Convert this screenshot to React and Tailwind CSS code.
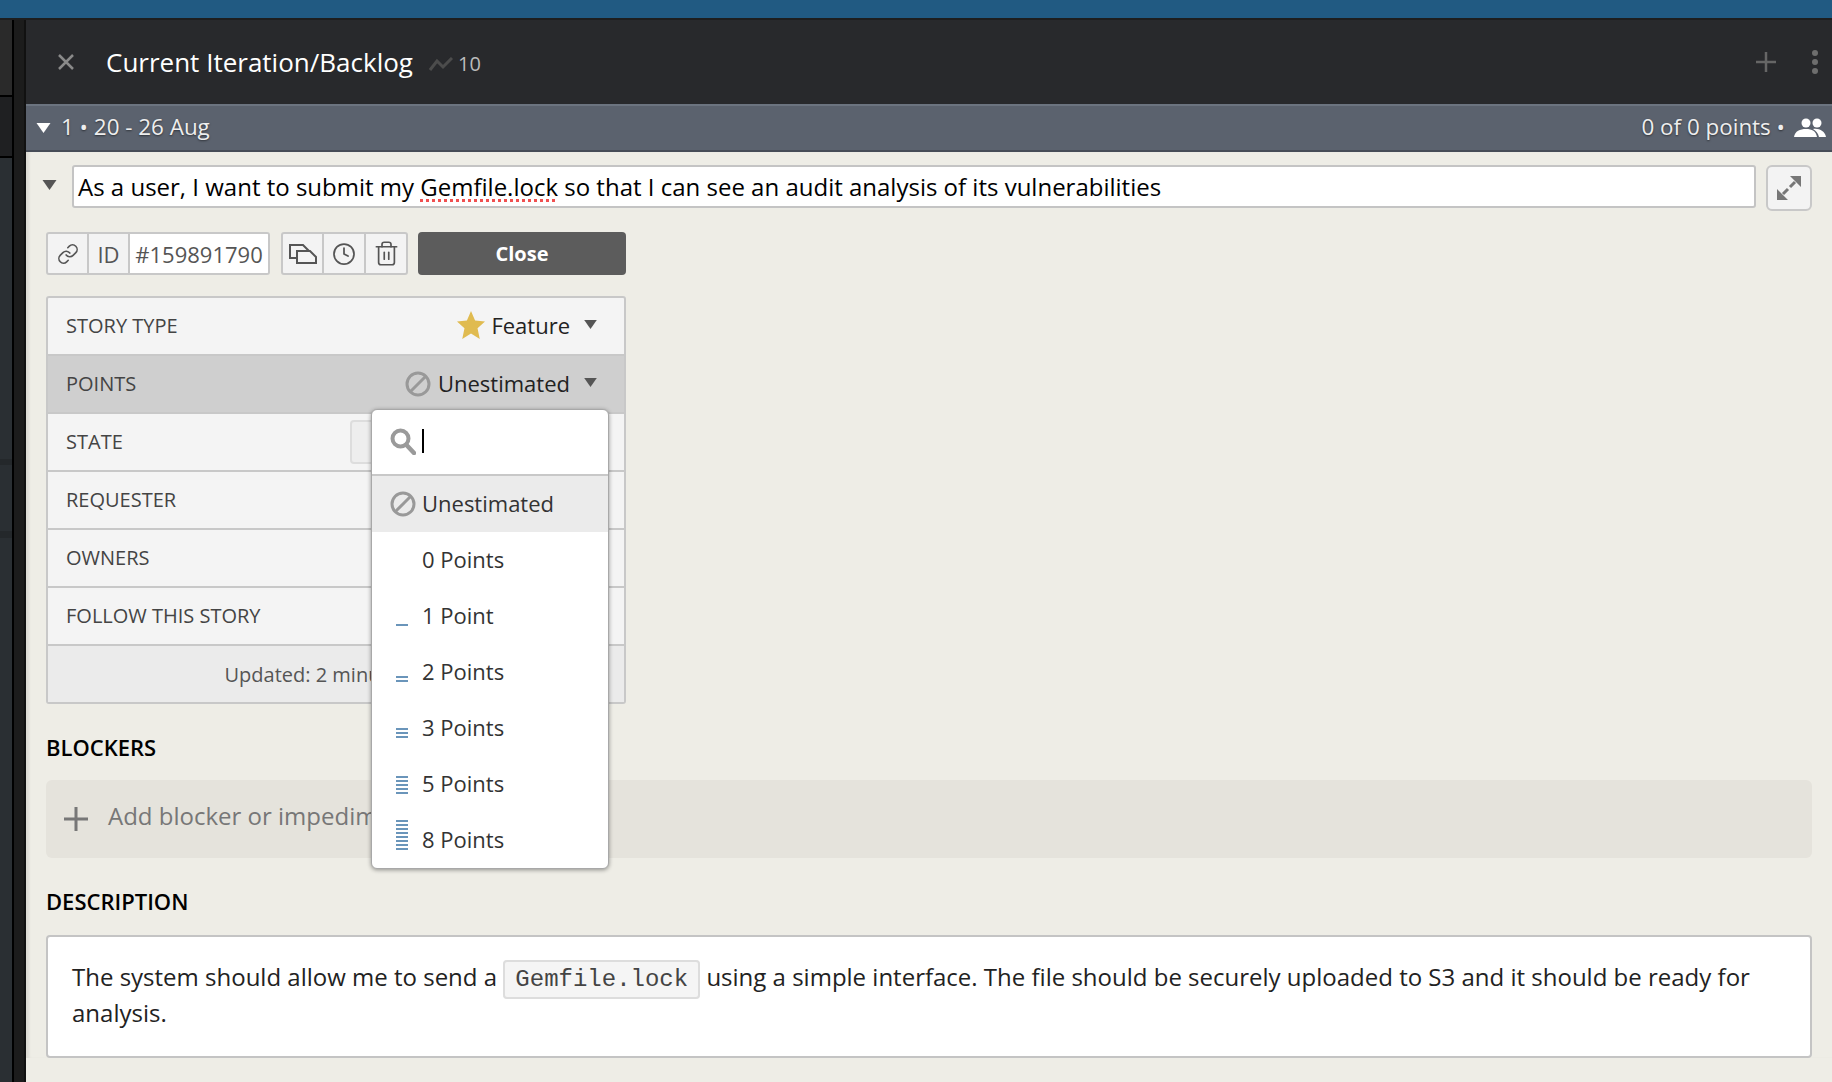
import { Link, Clock, Trash2 } from 'lucide-react';

function Caret({ className }) {
  return (
    <svg viewBox="0 0 14 10" className={className} fill="currentColor">
      <path d="M0 0h14L7 10z" />
    </svg>
  );
}

function NoEstimate() {
  return (
    <svg viewBox="0 0 26 26" className="h-[26px] w-[26px] shrink-0 text-[#999]" fill="none" stroke="currentColor" strokeWidth="3">
      <circle cx="13" cy="13" r="11" />
      <path d="M5.500 20.500 20.500 5.500" />
    </svg>
  );
}

function PlusIcon({ className }) {
  return (
    <svg viewBox="0 0 24 24" className={className} fill="none" stroke="currentColor" strokeWidth="3">
      <path d="M12 0v24M0 12h24" />
    </svg>
  );
}

function Bars({ count }) {
  return (
    <span className="flex w-3 flex-col justify-end gap-[2px]">
      {Array.from({ length: count }).map((_, i) => (
        <span key={i} className="h-[2px] w-3 shrink-0 bg-[#6a95ba]" />
      ))}
    </span>
  );
}

function Row({ label, children, active }) {
  return (
    <div
      className={`flex h-[58px] items-center justify-between border-b-2 border-[#c8c8c8] pl-[18px] pr-[26px] ${
        active ? 'bg-[#cfcfcf]' : ''
      }`}
    >
      <span className="text-[20px] text-[#444]">{label}</span>
      {children}
    </div>
  );
}

const points = [
  { label: '0 Points', count: 0 },
  { label: '1 Point', count: 1 },
  { label: '2 Points', count: 2 },
  { label: '3 Points', count: 3 },
  { label: '5 Points', count: 5 },
  { label: '8 Points', count: 8 },
];

function PointsMenu() {
  return (
    <div className="absolute left-[325px] top-[177px] z-10 w-[238px] rounded-md border border-[#a8a8a8] bg-white text-[22px] shadow-[0_1px_4px_rgba(0,0,0,0.4)]">
      <div className="flex h-[66px] items-center border-b-2 border-[#c8c8c8] pb-[2px] pl-[18px]">
        <svg viewBox="0 0 26 27" className="h-[27px] w-[26px] text-[#9a9a9a]" fill="none" stroke="currentColor">
          <circle cx="10.500" cy="10.500" r="8" strokeWidth="4" />
          <path d="m16.500 17 7.500 8" strokeWidth="4.500" strokeLinecap="round" />
        </svg>
        <span className="ml-[6px] h-6 w-[2px] bg-black" />
      </div>
      <div className="flex h-14 items-center gap-[6px] bg-[#ebebeb] pl-[18px] text-[#333]">
        <NoEstimate />
        <span className="mb-[2px]">Unestimated</span>
      </div>
      {points.map((p) => (
        <div key={p.label} className="flex h-14 items-center pl-6">
          <span className="flex h-5 w-[26px] items-end">
            {p.count > 0 && <Bars count={p.count} />}
          </span>
          <span className="mb-[2px] text-[#333]">{p.label}</span>
        </div>
      ))}
    </div>
  );
}

function SideRail() {
  return (
    <div className="flex w-[26px] shrink-0">
      <div className="flex w-3 flex-col border-t-2 border-[#1e1e1e] bg-[#2a2f33]">
        <div className="h-[77px] border-b-2 border-black bg-[#2a2a2a]" />
        <div className="h-[61px] border-b-2 border-black bg-[#1f2022]" />
        <div className="mt-[301px] h-[6px] bg-[#24282b]" />
        <div className="mt-[66px] h-[7px] bg-[#24282b]" />
      </div>
      <div className="w-[2px] border-t-2 border-[#1e1e1e] bg-black" />
      <div className="w-[10px] border-t-2 border-[#1e1e1e] bg-[#1c1c1c]" />
      <div className="w-[2px] border-t-2 border-[#1e1e1e] bg-[#111]" />
    </div>
  );
}

function App() {
  return (
    <div className="flex h-screen w-full flex-col overflow-hidden bg-[#24282c] font-['Open_Sans',sans-serif] text-[24px] leading-9">
      <div className="h-[18px] shrink-0 bg-[#215a82]" />
      <div className="flex min-h-0 flex-1">
        <SideRail />
        <div className="min-w-0 flex-1 bg-[#eeede6]">
          <div className="flex h-[86px] items-center border-t-2 border-[#1e1e1e] bg-[#28292c] pl-8 pr-[14px]">
            <svg viewBox="0 0 16 16" className="h-4 w-4 text-[#8a8a8a]" fill="none" stroke="currentColor" strokeWidth="2.500">
              <path d="m1 1 14 14M15 1 1 15" />
            </svg>
            <span className="ml-8 text-[26px] font-medium text-white">Current Iteration/Backlog</span>
            <span className="ml-4 mt-[3px] flex items-center gap-[5px] text-[20px] text-[#bbb]">
              <svg viewBox="0 0 24 14" className="h-[14px] w-6 text-[#4c4c4c]" fill="none" stroke="currentColor" strokeWidth="3">
                <path d="M1 13 8 4l6 6 9-9" />
              </svg>
              10
            </span>
            <div className="ml-auto flex items-center gap-9">
              <PlusIcon className="h-5 w-5 text-[#666]" />
              <span className="flex flex-col gap-[3px]">
                <span className="h-[6px] w-[6px] rounded-full bg-[#6e6e6e]" />
                <span className="h-[6px] w-[6px] rounded-full bg-[#6e6e6e]" />
                <span className="h-[6px] w-[6px] rounded-full bg-[#6e6e6e]" />
              </span>
            </div>
          </div>

          <div className="flex h-12 items-center border-t-2 border-b-2 border-t-[#6c7480] border-b-[#464c57] bg-[#5b626e] pl-[10px] pr-[6px] text-[22.400px] text-[#eee] [text-shadow:0_1px_2px_rgba(0,0,0,0.5)]">
            <Caret className="h-[10px] w-[15px] text-white" />
            <span className="mb-[2px] ml-[10px]">1 • 20 - 26 Aug</span>
            <span className="mb-[2px] ml-auto">0 of 0 points •</span>
            <svg viewBox="0 0 32 20" className="ml-[9px] h-5 w-8 text-white" fill="currentColor">
              <circle cx="12" cy="5" r="4.500" />
              <circle cx="23" cy="5" r="4.500" />
              <path d="M0 19c1-6 6-8 12-8s10 2 11 8zM19 11c6-1 12 2 13 8h-7c-1-4-3-6-6-8z" />
            </svg>
          </div>

          <div className="pl-[15px] pr-5 pt-[13px] shadow-[inset_4px_0_3px_-1px_rgba(0,0,0,0.08)]">
            <div className="flex items-start">
              <Caret className="mt-[15px] h-[10px] w-[17px] text-[#555]" />
              <div className="ml-[14px] flex h-[43px] flex-1 items-center rounded-[3px] border-2 border-[#c4c4c4] bg-white pl-[4px] text-black">
                <span>
                  As a user, I want to submit my{' '}
                  <span className="underline decoration-[#f05050] decoration-dotted decoration-[3px] underline-offset-[3px]">Gemfile.lock</span>{' '}
                  so that I can see an audit analysis of its vulnerabilities
                </span>
              </div>
              <button className="ml-[10px] flex h-[46px] w-[46px] items-center justify-center rounded-md border-2 border-[#c8c8c8] bg-[#f3f3f3] text-[#777]">
                <svg viewBox="0 0 24 24" className="h-6 w-6" fill="currentColor">
                  <path d="M13 0h11v11zM0 13v11h11z" />
                  <path d="m18 6-5 5M11 13l-5 5" fill="none" stroke="currentColor" strokeWidth="3" />
                </svg>
              </button>
            </div>

            <div className="relative ml-[5px]">
              <div className="mt-[21px] flex h-[43px] items-stretch">
                <div className="flex w-[224px] overflow-hidden rounded-[3px] border-2 border-[#c8c8c8] bg-[#f3f3f3] text-[#555]">
                  <span className="flex w-[41px] items-center justify-center border-r-2 border-[#c8c8c8]">
                    <Link className="h-[22px] w-[22px]" strokeWidth={1.75} />
                  </span>
                  <span className="flex w-[41px] items-center justify-center border-r-2 border-[#c8c8c8] text-[22px]">ID</span>
                  <span className="flex flex-1 items-center justify-center bg-white text-[22px]">#159891790</span>
                </div>
                <div className="ml-[11px] flex w-[127px] rounded-[3px] border-2 border-[#c8c8c8] bg-[#f3f3f3] text-[#555]">
                  <span className="flex w-[41px] items-center justify-center border-r-2 border-[#c8c8c8]">
                    <svg viewBox="0 0 28 20" className="h-5 w-7" fill="none" stroke="currentColor" strokeWidth="2">
                      <path d="M8 14H1V1h13l6 6M8 7h13l6 6v6H8z" />
                    </svg>
                  </span>
                  <span className="flex w-[42px] items-center justify-center border-r-2 border-[#c8c8c8]">
                    <Clock className="h-6 w-6" strokeWidth={1.75} />
                  </span>
                  <span className="flex flex-1 items-center justify-center">
                    <Trash2 className="h-[27px] w-[27px]" strokeWidth={1.5} />
                  </span>
                </div>
                <button className="ml-[10px] w-52 rounded-[4px] bg-[#5c5c5c] text-[20px] font-bold text-white">Close</button>
              </div>

              <div className="mt-[21px] w-[580px] overflow-hidden rounded-[3px] border-2 border-[#c8c8c8] bg-[#f4f4f4]">
                <Row label="STORY TYPE">
                  <span className="flex items-center text-[22px] text-[#222]">
                    <svg viewBox="0 0 24 24" className="mr-[6px] mb-[2px] h-7 w-7 text-[#e0bb50]" fill="currentColor">
                      <path d="M12 0l3.500 8.200 8.500.8-6.400 5.800 1.900 9.200-7.500-4.700L4.500 24l1.900-9.200L0 9l8.500-.8z" />
                    </svg>
                    <span className="mb-[2px]">Feature</span>
                    <Caret className="mb-[3px] ml-[13px] h-[9px] w-[15px] text-[#555]" />
                  </span>
                </Row>
                <Row label="POINTS" active>
                  <span className="flex items-center text-[22px] text-[#222]">
                    <span className="mr-[7px] flex"><NoEstimate /></span>
                    <span className="mb-[2px]">Unestimated</span>
                    <Caret className="mb-[3px] ml-[13px] h-[9px] w-[15px] text-[#555]" />
                  </span>
                </Row>
                <Row label="STATE">
                  <span className="h-[44px] w-[248px] rounded-[4px] border-2 border-[#ddd] bg-[#eee]" />
                </Row>
                <Row label="REQUESTER" />
                <Row label="OWNERS" />
                <Row label="FOLLOW THIS STORY" />
                <div className="flex h-14 items-center justify-center bg-[#ebebeb] pt-[2px] text-[20px] text-[#555]">
                  Updated: 2 minutes ago
                </div>
              </div>

              <PointsMenu />

              <h3 className="mt-[25px] text-[22px] font-semibold leading-9 text-black">BLOCKERS</h3>
              <div className="mt-[15px] flex h-[78px] items-center rounded-md bg-[#e5e3dc] pl-[18px] text-[#777]">
                <PlusIcon className="h-6 w-6 text-[#777]" />
                <span className="mb-[7px] ml-5">Add blocker or impediment</span>
              </div>

              <h3 className="mt-[25px] text-[22px] font-semibold leading-9 text-black">DESCRIPTION</h3>
              <div className="mt-4 h-[123px] rounded-[4px] border-2 border-[#c4c4c4] bg-white px-6 pt-[22px] text-[#222]">
                The system should allow me to send a{' '}
                <code className="rounded-[4px] border-2 border-[#ddd] bg-[#f5f5f5] px-[10px] py-1 font-['Liberation_Mono',monospace] leading-none text-[#444]">Gemfile.lock</code>{' '}
                using a simple interface. The file should be securely uploaded to S3 and it should be ready for analysis.
              </div>
            </div>
          </div>
        </div>
      </div>
    </div>
  );
}

export default App;
